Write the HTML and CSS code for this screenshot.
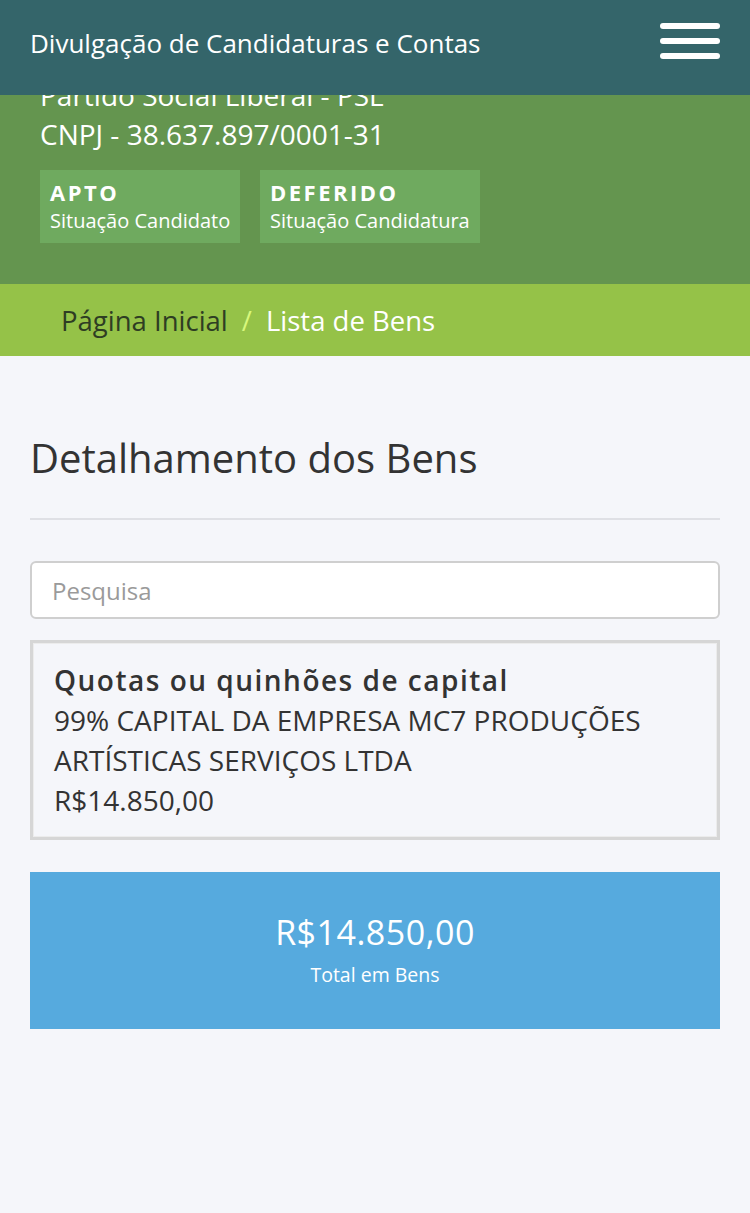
FILE: index.html
```html
<!DOCTYPE html>
<html lang="pt-BR">
<head>
<meta charset="utf-8">
<title>Divulgação de Candidaturas e Contas</title>
<link rel="stylesheet" href="styles.css">
</head>
<body>
<header class="topbar">
  <div class="topbar-title">Divulgação de Candidaturas e Contas</div>
  <button class="hamburger" aria-label="Menu">
    <span class="bar"></span><span class="bar"></span><span class="bar"></span>
  </button>
</header>

<section class="candidate">
  <div class="candidate-line">Partido Social Liberal - PSL</div>
  <div class="candidate-line">CNPJ - 38.637.897/0001-31</div>
  <div class="badges">
    <div class="badge badge-apto">
      <div class="badge-title">APTO</div>
      <div class="badge-sub">Situação Candidato</div>
    </div>
    <div class="badge badge-deferido">
      <div class="badge-title">DEFERIDO</div>
      <div class="badge-sub">Situação Candidatura</div>
    </div>
  </div>
</section>

<nav class="breadcrumb">
  <span class="crumb-link">Página Inicial</span>
  <span class="crumb-sep">/</span>
  <span class="crumb-current">Lista de Bens</span>
</nav>

<main class="content">
  <h1 class="page-title">Detalhamento dos Bens</h1>
  <hr class="divider">
  <input class="search" type="text" placeholder="Pesquisa">
  <div class="bem-card">
    <div class="bem-type">Quotas ou quinhões de capital</div>
    <div class="bem-desc">99% CAPITAL DA EMPRESA MC7 PRODUÇÕES ARTÍSTICAS SERVIÇOS LTDA</div>
    <div class="bem-value">R$14.850,00</div>
  </div>
  <div class="total-box">
    <div class="total-value">R$14.850,00</div>
    <div class="total-label">Total em Bens</div>
  </div>
</main>
</body>
</html>
```

FILE: styles.css
```css
* { box-sizing: border-box; }

html, body {
  margin: 0;
  padding: 0;
}

body {
  font-family: "Open Sans", "Noto Sans", sans-serif;
  background: #f5f6fa;
  color: #333;
  min-height: 1213px;
}

/* fixed top bar */
.topbar {
  position: fixed;
  top: 0;
  left: 0;
  right: 0;
  height: 95px;
  background: #34656a;
  display: flex;
  justify-content: space-between;
  align-items: flex-start;
  padding: 23px 30px 0 30px;
  z-index: 10;
}

.topbar-title {
  color: #fff;
  font-size: 26px;
  line-height: 32px;
  margin-top: 3.5px;
}

.hamburger {
  border: 0;
  background: transparent;
  padding: 0;
  display: flex;
  flex-direction: column;
  gap: 9px;
  width: 60px;
  cursor: pointer;
}

.hamburger .bar {
  display: block;
  width: 60px;
  height: 6px;
  border-radius: 3px;
  background: #fff;
}

/* candidate header */
.candidate {
  background: #64954f;
  color: #fff;
  padding: 76px 40px 41px 40px;
}

.candidate-line {
  font-size: 28px;
  line-height: 39px;
}

.badges {
  display: flex;
  gap: 20px;
  margin-top: 16px;
}

.badge {
  background: #6faa5f;
  padding: 8px 10px 8px 10px;
  height: 73px;
}

.badge-apto { width: 200px; }
.badge-deferido { width: 220px; }

.badge-title {
  font-size: 22px;
  line-height: 29px;
  font-weight: 700;
  letter-spacing: 2.5px;
}

.badge-sub {
  font-size: 20px;
  line-height: 28px;
  white-space: nowrap;
}

/* breadcrumb */
.breadcrumb {
  background: #95c248;
  height: 72px;
  display: flex;
  align-items: center;
  padding: 0 61px;
  font-size: 27.5px;
}

.crumb-link { color: #2e3d23; }
.crumb-sep { color: #d8f77c; padding: 0 14px; }
.crumb-current { color: #fff; }

/* main */
.content {
  padding: 75px 30px 40px 30px;
}

.page-title {
  margin: 0;
  font-size: 40px;
  font-weight: 400;
  line-height: 53px;
  color: #333;
}

.divider {
  border: 0;
  height: 2px;
  background: #dfe0e5;
  margin: 34px 0 41px 0;
}

.search {
  display: block;
  width: 100%;
  height: 58px;
  border: 2px solid #cfcfcf;
  border-radius: 6px;
  background: #fff;
  padding: 0 20px;
  font-family: inherit;
  font-size: 24px;
  color: #333;
}

.search::placeholder {
  color: #9a9a9a;
}

.bem-card {
  margin-top: 21px;
  border: 3px solid #d6d6d6;
  box-shadow: inset 0 0 0 1px #ececec;
  background: #f5f6fa;
  padding: 17px 21px 17px 21px;
  font-size: 28px;
  line-height: 40px;
  color: #333;
}

.bem-type {
  font-weight: 600;
  letter-spacing: 1.5px;
}

.total-box {
  margin-top: 32px;
  background: #56aade;
  color: #fff;
  text-align: center;
  padding: 37px 20px 41px 20px;
}

.total-value {
  font-size: 34px;
  line-height: 46px;
  letter-spacing: 0.5px;
}

.total-label {
  font-size: 19.5px;
  line-height: 27px;
  margin-top: 6px;
}
```
